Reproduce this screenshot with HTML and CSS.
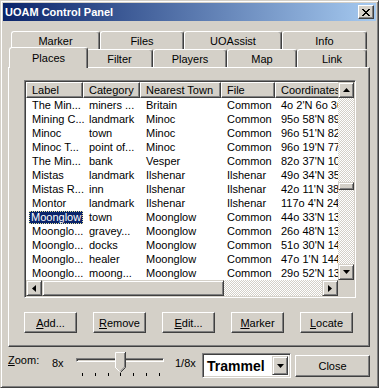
FILE: index.html
```html
<!DOCTYPE html>
<html lang="en">
<head>
  <meta charset="UTF-8" />
  <title>UOAM Control Panel</title>
  <link rel="stylesheet" href="styles.css">
</head>
<body>
  <div class="window">
    <div class="titlebar">
      <span class="title">UOAM Control Panel</span>
      <div class="title-close">
        <svg width="8" height="7" viewBox="0 0 8 7"><path d="M0 0 L7 7 M1 0 L8 7 M7 0 L0 7 M8 0 L1 7" stroke="#000" stroke-width="1" fill="none"/></svg>
      </div>
    </div>

    <div class="client">
      <!-- tabs -->
      <div class="tabs">
        <div class="tab-row">
          <div class="tab w-marker">Marker</div>
          <div class="tab w-files">Files</div>
          <div class="tab w-uoassist">UOAssist</div>
          <div class="tab w-info">Info</div>
        </div>
        <div class="tab-row">
          <div class="tab tab-active w-places">Places</div>
          <div class="tab w-filter">Filter</div>
          <div class="tab w-players">Players</div>
          <div class="tab w-map">Map</div>
          <div class="tab w-link">Link</div>
        </div>
      </div>

      <div class="panel">
        <div class="listview">
          <div class="lv-body">
            <div class="lv-content">
              <div class="lv-header">
                <div class="hcell c-label">Label</div>
                <div class="hcell c-cat">Category</div>
                <div class="hcell c-town">Nearest Town</div>
                <div class="hcell c-file">File</div>
                <div class="hcell c-coord">Coordinates</div>
              </div>
              <div class="lv-rows">
                <div class="row"><span class="c-label">The Min...</span><span class="c-cat">miners ...</span><span class="c-town">Britain</span><span class="c-file">Common</span><span class="c-coord">4o 2'N 6o 36'E</span></div>
                <div class="row"><span class="c-label">Mining C...</span><span class="c-cat">landmark</span><span class="c-town">Minoc</span><span class="c-file">Common</span><span class="c-coord">95o 58'N 89o 1'E</span></div>
                <div class="row"><span class="c-label">Minoc</span><span class="c-cat">town</span><span class="c-town">Minoc</span><span class="c-file">Common</span><span class="c-coord">96o 51'N 82o 7'E</span></div>
                <div class="row"><span class="c-label">Minoc T...</span><span class="c-cat">point of...</span><span class="c-town">Minoc</span><span class="c-file">Common</span><span class="c-coord">96o 19'N 77o 4'E</span></div>
                <div class="row"><span class="c-label">The Min...</span><span class="c-cat">bank</span><span class="c-town">Vesper</span><span class="c-file">Common</span><span class="c-coord">82o 37'N 10o 2'E</span></div>
                <div class="row"><span class="c-label">Mistas</span><span class="c-cat">landmark</span><span class="c-town">Ilshenar</span><span class="c-file">Ilshenar</span><span class="c-coord">49o 34'N 35o 1'E</span></div>
                <div class="row"><span class="c-label">Mistas R...</span><span class="c-cat">inn</span><span class="c-town">Ilshenar</span><span class="c-file">Ilshenar</span><span class="c-coord">42o 11'N 38o 5'E</span></div>
                <div class="row"><span class="c-label">Montor</span><span class="c-cat">landmark</span><span class="c-town">Ilshenar</span><span class="c-file">Ilshenar</span><span class="c-coord">117o 4'N 24o 9'E</span></div>
                <div class="row"><span class="c-label"><span class="selected">Moonglow</span></span><span class="c-cat">town</span><span class="c-town">Moonglow</span><span class="c-file">Common</span><span class="c-coord">44o 33'N 13o 6'E</span></div>
                <div class="row"><span class="c-label">Moonglo...</span><span class="c-cat">gravey...</span><span class="c-town">Moonglow</span><span class="c-file">Common</span><span class="c-coord">26o 48'N 13o 2'E</span></div>
                <div class="row"><span class="c-label">Moonglo...</span><span class="c-cat">docks</span><span class="c-town">Moonglow</span><span class="c-file">Common</span><span class="c-coord">51o 30'N 14o 8'E</span></div>
                <div class="row"><span class="c-label">Moonglo...</span><span class="c-cat">healer</span><span class="c-town">Moonglow</span><span class="c-file">Common</span><span class="c-coord">47o 1'N 144o 3'E</span></div>
                <div class="row"><span class="c-label">Moonglo...</span><span class="c-cat">moong...</span><span class="c-town">Moonglow</span><span class="c-file">Common</span><span class="c-coord">29o 52'N 13o 4'E</span></div>
              </div>
            </div>
            <div class="vscroll">
              <div class="sb-btn">
                <svg width="7" height="4" viewBox="0 0 7 4"><path d="M3.5 0 L7 4 L0 4 Z" fill="#000"/></svg>
              </div>
              <div class="sb-track vtrack-top"></div>
              <div class="sb-thumb vthumb"></div>
              <div class="sb-track vtrack-bottom"></div>
              <div class="sb-btn">
                <svg width="7" height="4" viewBox="0 0 7 4"><path d="M0 0 L7 0 L3.5 4 Z" fill="#000"/></svg>
              </div>
            </div>
          </div>
          <div class="lv-foot">
            <div class="hscroll">
              <div class="sb-btn">
                <svg width="4" height="7" viewBox="0 0 4 7"><path d="M4 0 L4 7 L0 3.5 Z" fill="#000"/></svg>
              </div>
              <div class="sb-thumb hthumb"></div>
              <div class="sb-track htrack"></div>
              <div class="sb-btn">
                <svg width="4" height="7" viewBox="0 0 4 7"><path d="M0 0 L4 3.5 L0 7 Z" fill="#000"/></svg>
              </div>
            </div>
            <div class="corner"></div>
          </div>
        </div>

        <div class="buttons">
          <button class="btn"><u>A</u>dd...</button>
          <button class="btn"><u>R</u>emove</button>
          <button class="btn"><u>E</u>dit...</button>
          <button class="btn"><u>M</u>arker</button>
          <button class="btn"><u>L</u>ocate</button>
        </div>
      </div>

      <div class="footer">
        <span class="zoom-label"><u>Z</u>oom:</span>
        <span class="zoom-min">8x</span>
        <div class="slider">
          <div class="slider-track"></div>
          <svg class="slider-thumb" width="11" height="21" viewBox="0 0 11 21">
            <path d="M0.5 0.5 H10.5 V15.5 L5.5 20.5 L0.5 15.5 Z" fill="#d4d0c8"/>
            <path d="M0.5 16 V0.5 H10" stroke="#fff" fill="none"/>
            <path d="M0.5 15.5 L4.5 19.5" stroke="#fff" fill="none"/>
            <path d="M10.5 0 V15.5 L5.5 20.5" stroke="#404040" fill="none"/>
            <path d="M9.5 1 V15 L5.5 19" stroke="#808080" fill="none"/>
          </svg>
          <div class="ticks">
            <i></i><i></i><i></i><i></i><i></i><i></i><i></i>
          </div>
        </div>
        <span class="zoom-max">1/8x</span>
        <div class="select">
          <span class="select-value">Trammel</span>
          <div class="sb-btn select-btn">
            <svg width="7" height="4" viewBox="0 0 7 4"><path d="M0 0 L7 0 L3.5 4 Z" fill="#000"/></svg>
          </div>
        </div>
        <button class="btn close-btn">Close</button>
      </div>
    </div>
  </div>
</body>
</html>
```

FILE: styles.css
```css
* {
  box-sizing: border-box;
}

body {
  margin: 0;
  font-family: "Liberation Sans", Arial, sans-serif;
  font-size: 11px;
  color: #000;
  background: #d4d0c8;
}

/* raised / sunken 3d borders */
.raised {
  border: 1px solid;
}

.window {
  width: 379px;
  height: 388px;
  background: #d4d0c8;
  border: 1px solid;
  border-color: #d4d0c8 #404040 #404040 #d4d0c8;
  box-shadow: inset 1px 1px #fff, inset -1px -1px #808080;
  padding: 2px;
}

.titlebar {
  height: 18px;
  display: flex;
  align-items: center;
  justify-content: space-between;
  padding: 0 2px;
  background: linear-gradient(to right, #0a246a, #a6caf0);
  color: #fff;
  font-weight: bold;
}

.title-close {
  width: 16px;
  height: 14px;
  display: flex;
  align-items: center;
  justify-content: center;
  background: #d4d0c8;
  border: 1px solid;
  border-color: #fff #404040 #404040 #fff;
  box-shadow: inset -1px -1px #808080;
}

.client {
  padding: 10px 5px 0 5px;
}

/* tabs */
.tabs {
  margin-left: 3px;
}

.tab-row {
  display: flex;
  align-items: flex-start;
  height: 18px;
}

.tab {
  height: 18px;
  display: flex;
  align-items: center;
  justify-content: center;
  background: #d4d0c8;
  border-left: 1px solid #fff;
  border-top: 1px solid #fff;
  border-right: 1px solid #404040;
  box-shadow: inset -1px 0 #808080;
  border-radius: 3px 3px 0 0;
}

.tab-active {
  position: relative;
  z-index: 1;
  height: 21px;
  margin: -2px -2px 0 -2px;
  padding-bottom: 1px;
}

.w-marker { width: 89px; }
.w-files { width: 84px; }
.w-uoassist { width: 98px; }
.w-info { width: 85px; }
.w-places { width: 79px; }
.w-filter { width: 67px; }
.w-players { width: 74px; }
.w-map { width: 70px; }
.w-link { width: 70px; }

.panel {
  width: 362px;
  height: 280px;
  border: 1px solid;
  border-color: #fff #404040 #404040 #fff;
  box-shadow: inset -1px -1px #808080;
  padding: 12px 0 0 15px;
}

/* list view */
.listview {
  width: 332px;
  height: 218px;
  border: 1px solid;
  border-color: #808080 #fff #fff #808080;
  box-shadow: inset 1px 1px #404040, inset -1px -1px #d4d0c8;
  padding: 1px;
  background: #fff;
}

.lv-body {
  display: flex;
  height: 198px;
}

.lv-content {
  width: 312px;
  overflow: hidden;
}

.lv-header {
  display: flex;
  height: 16px;
  width: 400px;
}

.hcell {
  height: 16px;
  line-height: 14px;
  padding-left: 5px;
  background: #d4d0c8;
  border: 1px solid;
  border-color: #fff #404040 #404040 #fff;
  box-shadow: inset -1px -1px #808080;
  white-space: nowrap;
}

.c-label { width: 57px; }
.c-cat { width: 57px; }
.c-town { width: 81px; }
.c-file { width: 54px; }
.c-coord { width: 110px; }

.row {
  display: flex;
  height: 14px;
  line-height: 14px;
  width: 400px;
}

.row span {
  flex: none;
  padding-left: 6px;
  white-space: nowrap;
}

.row .selected {
  display: inline-block;
  margin-left: -3px;
  padding: 0 2px;
  line-height: 12px;
  height: 13px;
  background: #0a246a;
  color: #fff;
  outline: 1px dotted #e8e4a0;
  outline-offset: -1px;
}

.vscroll {
  width: 16px;
  display: flex;
  flex-direction: column;
}

.sb-btn {
  width: 16px;
  height: 16px;
  flex: none;
  display: flex;
  align-items: center;
  justify-content: center;
  background: #d4d0c8;
  border: 1px solid;
  border-color: #d4d0c8 #404040 #404040 #d4d0c8;
  box-shadow: inset 1px 1px #fff, inset -1px -1px #808080;
}

.sb-track {
  background-image: repeating-conic-gradient(#d4d0c8 0% 25%, #fff 0% 50%);
  background-size: 2px 2px;
}

.sb-thumb {
  flex: none;
  background: #d4d0c8;
  border: 1px solid;
  border-color: #d4d0c8 #404040 #404040 #d4d0c8;
  box-shadow: inset 1px 1px #fff, inset -1px -1px #808080;
}

.vtrack-top { height: 84px; }
.vthumb { height: 8px; }
.vtrack-bottom { flex: 1; }

.lv-foot {
  display: flex;
  height: 16px;
}

.hscroll {
  width: 312px;
  display: flex;
}

.hthumb { width: 182px; }
.htrack { flex: 1; }

.corner {
  width: 16px;
  background: #d4d0c8;
}

/* buttons */
.buttons {
  display: flex;
  gap: 16px;
  margin-top: 14px;
}

.btn {
  width: 53px;
  height: 21px;
  padding: 0;
  font-family: inherit;
  font-size: 11px;
  color: #000;
  background: #d4d0c8;
  border: 1px solid;
  border-color: #fff #404040 #404040 #fff;
  box-shadow: inset -1px -1px #808080;
}

/* footer */
.footer {
  display: flex;
  align-items: flex-start;
  padding-top: 6px;
}

.zoom-label {
  width: 44px;
  line-height: 14px;
}

.zoom-min {
  width: 18px;
  margin-top: 3px;
  line-height: 14px;
}

.slider {
  position: relative;
  width: 105px;
  height: 28px;
}

.slider-track {
  margin: 5px 0 0 6px;
  width: 88px;
  height: 4px;
  border: 1px solid;
  border-color: #808080 #fff #fff #808080;
  box-shadow: inset 1px 1px #404040;
}

.slider-thumb {
  position: absolute;
  left: 45px;
  top: -1px;
}

.ticks {
  display: flex;
  justify-content: space-between;
  width: 78px;
  margin: 11px 0 0 12px;
}

.ticks i {
  width: 1px;
  height: 3px;
  background: #000;
}

.zoom-max {
  width: 27px;
  margin-top: 3px;
  line-height: 14px;
}

.select {
  width: 89px;
  height: 25px;
  display: flex;
  align-items: center;
  padding: 2px;
  background: #fff;
  border: 1px solid;
  border-color: #808080 #fff #fff #808080;
  box-shadow: inset 1px 1px #404040, inset -1px -1px #d4d0c8;
}

.select-value {
  flex: 1;
  padding-left: 2px;
  font-size: 14px;
  font-weight: bold;
}

.select-btn {
  height: 19px;
}

.close-btn {
  width: 75px;
  height: 22px;
  margin: 2px 0 0 4px;
}
```
